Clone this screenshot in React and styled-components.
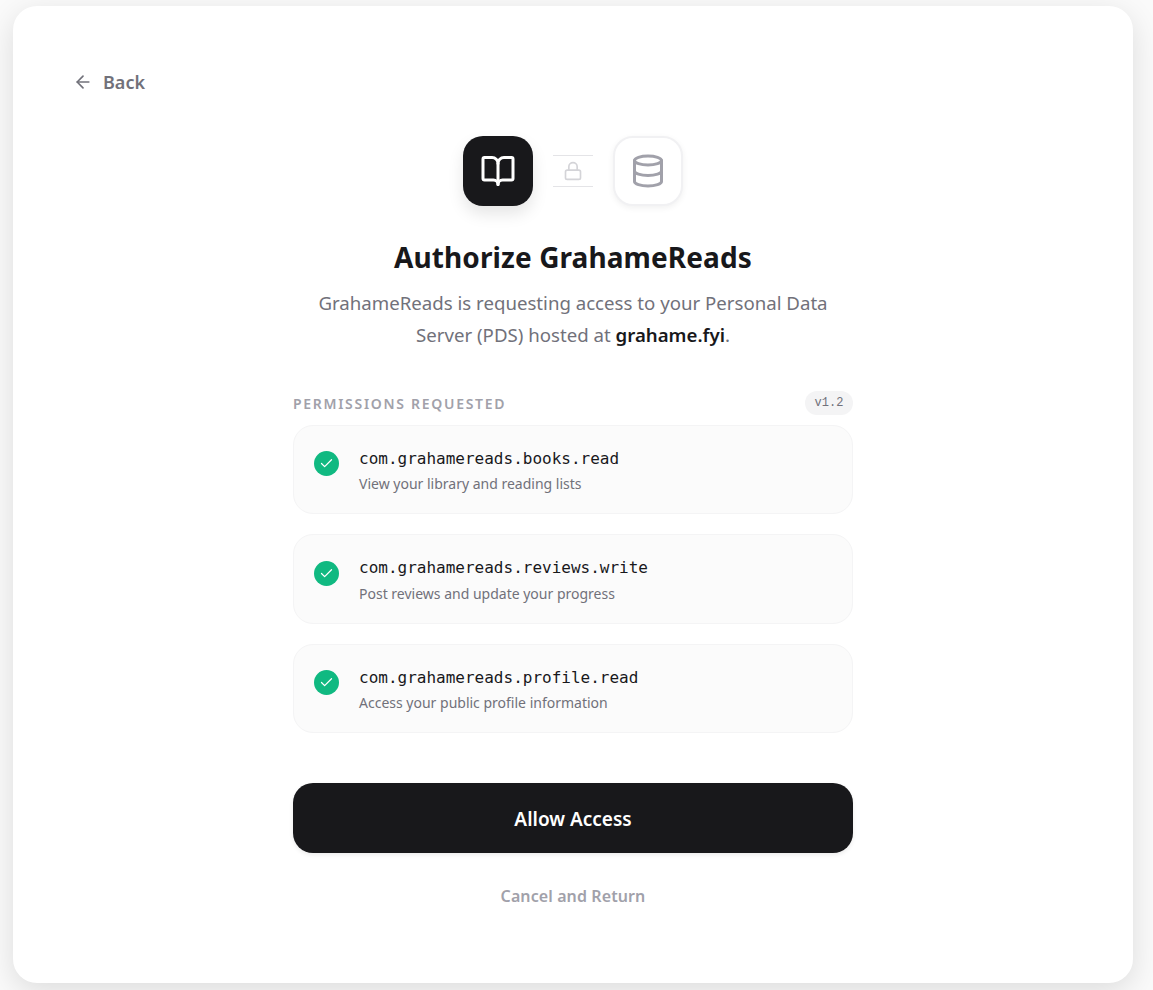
import React from "react";
import styled, { createGlobalStyle } from "styled-components";
import { ArrowLeft, BookOpen, Check, Database, Lock } from "lucide-react";

const GlobalStyle = createGlobalStyle`
  html, body {
    margin: 0;
    padding: 0;
    background: #fafafa;
  }
  body {
    font-family: "Noto Sans", "Open Sans", sans-serif;
    color: #18181b;
  }
`;

const Page = styled.div`
  box-sizing: border-box;
  width: 1153px;
  height: 990px;
  padding: 6px 20px 7px 13px;
  overflow: hidden;
`;

const Card = styled.main`
  box-sizing: border-box;
  width: 1120px;
  height: 977px;
  padding: 64px 60px 0;
  background: #fff;
  border-radius: 24px;
  box-shadow: 0 8px 30px rgba(0, 0, 0, 0.12);
`;

const BackLink = styled.a`
  display: flex;
  align-items: center;
  gap: 10px;
  height: 24px;
  font-size: 18px;
  font-weight: 600;
  color: #71717a;
`;

const Center = styled.div`
  display: flex;
  flex-direction: column;
  align-items: center;
  width: 560px;
  margin: 42px auto 0;
`;

const IconRow = styled.div`
  display: flex;
  align-items: center;
  gap: 20px;
`;

const AppTile = styled.div`
  display: flex;
  align-items: center;
  justify-content: center;
  width: 70px;
  height: 70px;
  border-radius: 20px;
  background: ${props => (props.$dark ? "#18181b" : "#fff")};
  color: ${props => (props.$dark ? "#fff" : "#a1a1aa")};
  box-shadow: ${props =>
    props.$dark ? "0 8px 16px rgba(0, 0, 0, 0.1)" : "0 2px 6px rgba(0, 0, 0, 0.06)"};
  border: ${props => (props.$dark ? "0" : "2px solid #f1f1f3")};
  box-sizing: border-box;
`;

const Connector = styled.div`
  display: flex;
  align-items: center;
  justify-content: center;
  box-sizing: border-box;
  width: 40px;
  height: 32px;
  border-top: 1px solid #e4e4e7;
  border-bottom: 1px solid #e4e4e7;
  color: #d4d4d8;
`;

const Title = styled.h1`
  margin: 31px 0 0;
  font-size: 28px;
  line-height: 40px;
  font-weight: 700;
  letter-spacing: 0.1px;
  color: #18181b;
`;

const Lead = styled.p`
  width: 520px;
  margin: 10px 0 0;
  font-size: 18.65px;
  line-height: 32px;
  text-align: center;
  color: #71717a;

  strong {
    font-weight: 600;
    color: #18181b;
  }
`;

const SectionHead = styled.div`
  display: flex;
  align-items: center;
  justify-content: space-between;
  width: 100%;
  margin-top: 40px;
`;

const SectionLabel = styled.span`
  font-size: 14px;
  font-weight: 600;
  letter-spacing: 1.7px;
  color: #a1a1aa;
`;

const Version = styled.span`
  padding: 0 9.6px;
  height: 24px;
  line-height: 24px;
  border-radius: 12px;
  background: #f4f4f5;
  font-family: "Liberation Mono", monospace;
  font-size: 12px;
  color: #71717a;
`;

const ScopeList = styled.ul`
  display: flex;
  flex-direction: column;
  gap: 20px;
  width: 100%;
  margin: 9.75px 0 0;
  padding: 0;
  list-style: none;
`;

const Scope = styled.li`
  display: flex;
  align-items: flex-start;
  gap: 20px;
  padding: 21px 20px 19px;
  background: #fbfbfb;
  border: 1px solid #f4f4f5;
  border-radius: 20px;
`;

const CheckDot = styled.span`
  display: flex;
  align-items: center;
  justify-content: center;
  flex: none;
  width: 25px;
  height: 25px;
  margin-top: 4.5px;
  border-radius: 50%;
  background: #10b981;
  color: #fff;
`;

const ScopeName = styled.div`
  font-family: "DejaVu Sans Mono", monospace;
  font-size: 16px;
  line-height: 24px;
  color: #18181b;
`;

const ScopeDesc = styled.div`
  margin-top: 3.5px;
  font-size: 14px;
  line-height: 20px;
  color: #71717a;
`;

const AllowButton = styled.button`
  width: 100%;
  height: 70px;
  margin-top: 50px;
  padding: 2px 0 0;
  border: 0;
  border-radius: 20px;
  background: #18181b;
  box-shadow: 0 2px 4px rgba(0, 0, 0, 0.08);
  font-family: inherit;
  font-size: 19px;
  font-weight: 600;
  color: #fff;
`;

const CancelButton = styled.button`
  margin-top: 31px;
  padding: 0;
  height: 24px;
  border: 0;
  background: none;
  font-family: inherit;
  font-size: 16px;
  font-weight: 600;
  letter-spacing: 0.1px;
  color: #a1a1aa;
`;

const scopes = [
  { name: "com.grahamereads.books.read", desc: "View your library and reading lists" },
  { name: "com.grahamereads.reviews.write", desc: "Post reviews and update your progress" },
  { name: "com.grahamereads.profile.read", desc: "Access your public profile information" }
];

export default function App() {
  return (
    <Page>
      <GlobalStyle />
      <Card>
        <BackLink>
          <ArrowLeft size={20} />
          Back
        </BackLink>
        <Center>
          <IconRow>
            <AppTile $dark>
              <BookOpen size={36} strokeWidth={2} />
            </AppTile>
            <Connector>
              <Lock size={20} strokeWidth={2} />
            </Connector>
            <AppTile>
              <Database size={36} strokeWidth={2} />
            </AppTile>
          </IconRow>
          <Title>Authorize GrahameReads</Title>
          <Lead>
            GrahameReads is requesting access to your Personal Data Server (PDS) hosted at{" "}
            <strong>grahame.fyi</strong>.
          </Lead>
          <SectionHead>
            <SectionLabel>PERMISSIONS REQUESTED</SectionLabel>
            <Version>v1.2</Version>
          </SectionHead>
          <ScopeList>
            {scopes.map(scope => (
              <Scope key={scope.name}>
                <CheckDot>
                  <Check size={15} strokeWidth={2} />
                </CheckDot>
                <div>
                  <ScopeName>{scope.name}</ScopeName>
                  <ScopeDesc>{scope.desc}</ScopeDesc>
                </div>
              </Scope>
            ))}
          </ScopeList>
          <AllowButton>Allow Access</AllowButton>
          <CancelButton>Cancel and Return</CancelButton>
        </Center>
      </Card>
    </Page>
  );
}
